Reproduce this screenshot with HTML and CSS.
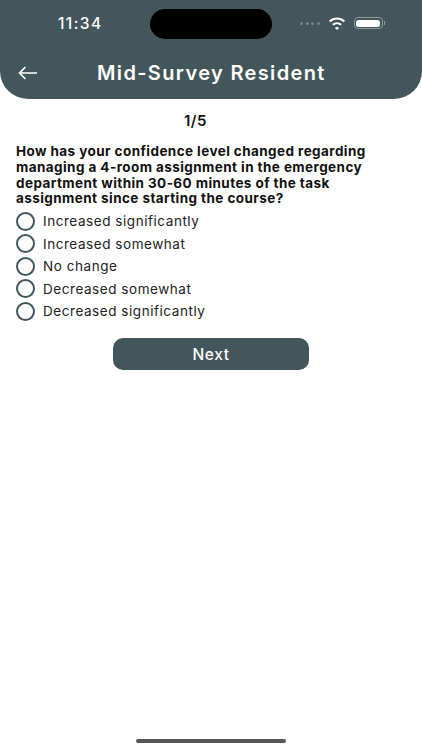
FILE: index.html
```html
<!DOCTYPE html>
<html lang="en">
<head>
    <meta charset="UTF-8">
    <title>Mid-Survey Resident</title>
    <link rel="stylesheet" href="styles.css">
</head>
<body>
    <div class="screen">
        <div class="header">
            <div class="status-bar">
                <span class="time">11:34</span>
                <div class="island"></div>
                <div class="status-icons">
                    <div class="signal"><i></i><i></i><i></i><i></i></div>
                    <svg class="wifi" width="18" height="13" viewBox="0 0 16 12">
                        <path d="M8 9 L10 10.2 L8 12 L6 10.2 Z" fill="#fff"/>
                        <path d="M4.2 7.2 A5.6 5.6 0 0 1 11.8 7.2" fill="none" stroke="#fff" stroke-width="1.9"/>
                        <path d="M1.2 4.1 A10 10 0 0 1 14.8 4.1" fill="none" stroke="#fff" stroke-width="1.9"/>
                    </svg>
                    <div class="battery"><div class="battery-fill"></div></div>
                    <div class="battery-cap"></div>
                </div>
            </div>
            <div class="title-bar">
                <svg class="back" width="20" height="14" viewBox="0 0 20 14">
                    <path d="M19 7 H1.5 M7.5 1 L1.5 7 L7.5 13" fill="none" stroke="#fff" stroke-width="1.7"/>
                </svg>
                <h1>Mid-Survey Resident</h1>
            </div>
        </div>

        <div class="content">
            <div class="progress">1/5</div>
            <p class="question">How has your confidence level changed regarding managing a 4-room assignment in the emergency department within 30-60 minutes of the task assignment since starting the course?</p>
            <div class="options">
                <div class="option"><span class="radio"></span>Increased significantly</div>
                <div class="option"><span class="radio"></span>Increased somewhat</div>
                <div class="option"><span class="radio"></span>No change</div>
                <div class="option"><span class="radio"></span>Decreased somewhat</div>
                <div class="option"><span class="radio"></span>Decreased significantly</div>
            </div>
            <button class="next">Next</button>
        </div>

        <div class="home-bar"></div>
    </div>
</body>
</html>
```

FILE: styles.css
```css
* {
    box-sizing: border-box;
}

body {
    margin: 0;
    font-family: "Inter", "Liberation Sans", sans-serif;
    background: #fff;
    color: #111;
}

.screen {
    width: 422px;
    height: 750px;
    display: flex;
    flex-direction: column;
    overflow: hidden;
}

.header {
    height: 99px;
    background: #42565b;
    border-radius: 0 0 28px 28px;
    color: #fff;
    padding-top: 9px;
}

.status-bar {
    height: 30px;
    display: flex;
    align-items: center;
    padding-left: 58px;
}

.time {
    width: 92px;
    font-size: 15.5px;
    font-weight: 500;
    letter-spacing: 1.4px;
    margin-top: -2px;
}

.island {
    width: 122px;
    height: 30px;
    background: #000;
    border-radius: 15px;
}

.status-icons {
    display: flex;
    align-items: center;
    margin-left: 28px;
    margin-top: -2px;
}

.signal {
    display: flex;
    gap: 2.5px;
    margin-right: 8px;
}

.signal i {
    width: 3px;
    height: 3px;
    border-radius: 50%;
    background: #74858a;
}

.wifi {
    margin-right: 8px;
}

.battery {
    width: 29px;
    height: 12px;
    border: 1px solid #8d9b9e;
    border-radius: 4px;
    padding: 1.5px;
}

.battery-fill {
    height: 100%;
    background: #fff;
    border-radius: 2.5px;
}

.battery-cap {
    width: 1px;
    height: 4px;
    margin-left: 1px;
    background: #8d9b9e;
}

.title-bar {
    display: flex;
    align-items: center;
    margin-top: 19px;
    padding-left: 18px;
    height: 30px;
}

.back {
    flex: none;
}

h1 {
    margin: 0 0 0 59px;
    font-size: 20px;
    font-weight: 600;
    letter-spacing: 1.35px;
    white-space: nowrap;
}

.content {
    padding: 12px 16px 0;
    display: flex;
    flex-direction: column;
}

.progress {
    text-align: center;
    font-size: 15px;
    font-weight: 600;
    line-height: 20px;
    margin-right: 31px;
    letter-spacing: 0.5px;
}

.question {
    margin: 13px 0 0;
    font-size: 13.5px;
    font-weight: 700;
    line-height: 15.8px;
    letter-spacing: 0.42px;
    color: #111;
}

.options {
    margin-top: 3px;
}

.option {
    display: flex;
    align-items: center;
    height: 22.5px;
    font-size: 13.5px;
    letter-spacing: 0.55px;
    color: #222;
}

.radio {
    width: 19px;
    height: 19px;
    border: 2px solid #42565b;
    border-radius: 50%;
    margin-right: 8px;
    flex: none;
}

.next {
    align-self: center;
    width: 196px;
    height: 32px;
    margin-top: 15px;
    padding-top: 2px;
    background: #42565b;
    color: #fff;
    border: none;
    border-radius: 10px;
    font-family: inherit;
    font-size: 15.5px;
    font-weight: 500;
    letter-spacing: 0.6px;
}

.home-bar {
    width: 150px;
    height: 4px;
    background: #555;
    border-radius: 2px;
    margin: auto auto 7px;
}
```
